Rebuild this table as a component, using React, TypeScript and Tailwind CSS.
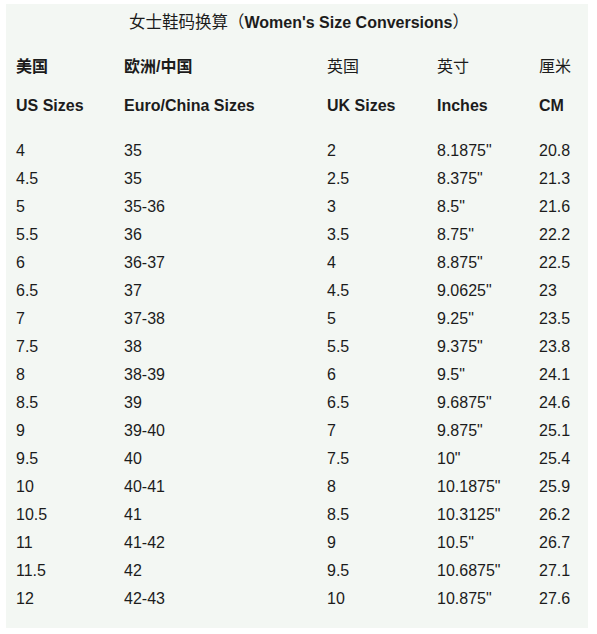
const rows: [string, string, string, string, string][] = [
  ["4", "35", "2", "8.1875\"", "20.8"],
  ["4.5", "35", "2.5", "8.375\"", "21.3"],
  ["5", "35-36", "3", "8.5\"", "21.6"],
  ["5.5", "36", "3.5", "8.75\"", "22.2"],
  ["6", "36-37", "4", "8.875\"", "22.5"],
  ["6.5", "37", "4.5", "9.0625\"", "23"],
  ["7", "37-38", "5", "9.25\"", "23.5"],
  ["7.5", "38", "5.5", "9.375\"", "23.8"],
  ["8", "38-39", "6", "9.5\"", "24.1"],
  ["8.5", "39", "6.5", "9.6875\"", "24.6"],
  ["9", "39-40", "7", "9.875\"", "25.1"],
  ["9.5", "40", "7.5", "10\"", "25.4"],
  ["10", "40-41", "8", "10.1875\"", "25.9"],
  ["10.5", "41", "8.5", "10.3125\"", "26.2"],
  ["11", "41-42", "9", "10.5\"", "26.7"],
  ["11.5", "42", "9.5", "10.6875\"", "27.1"],
  ["12", "42-43", "10", "10.875\"", "27.6"],
];

const cols = "grid grid-cols-[108px_203px_110px_102px_1fr]";

export default function App() {
  return (
    <div className="h-[634px] w-[597px] bg-white pt-[4px] pl-[6px] font-['Liberation_Sans','Noto_Sans_CJK_SC',sans-serif] text-[16px] text-[#1c1c1c]">
      <div className="h-[624px] w-[582px] bg-[#f3f7f3] pt-[4px] pl-[10px]">
        <div className="h-[28px] pr-[6px] text-center leading-[28px]">
          <span className="text-[16.5px]">女士鞋码换算（</span>
          <span className="font-bold">Women's Size Conversions</span>
          <span className="text-[16.5px]">）</span>
        </div>

        <div className={`${cols} mt-[17px] h-[28px] items-center leading-[28px]`}>
          <span className="font-bold">美国</span>
          <span className="font-bold">欧洲/中国</span>
          <span>英国</span>
          <span>英寸</span>
          <span>厘米</span>
        </div>

        <div className={`${cols} mt-[11px] h-[28px] items-center font-bold leading-[28px]`}>
          <span>US Sizes</span>
          <span>Euro/China Sizes</span>
          <span>UK Sizes</span>
          <span>Inches</span>
          <span>CM</span>
        </div>

        <div className="mt-[17px] flex flex-col">
          {rows.map((r) => (
            <div key={r[0]} className={`${cols} h-[28px] items-center leading-[28px]`}>
              {r.map((c, i) => (
                <span key={i}>{c}</span>
              ))}
            </div>
          ))}
        </div>
      </div>
    </div>
  );
}
